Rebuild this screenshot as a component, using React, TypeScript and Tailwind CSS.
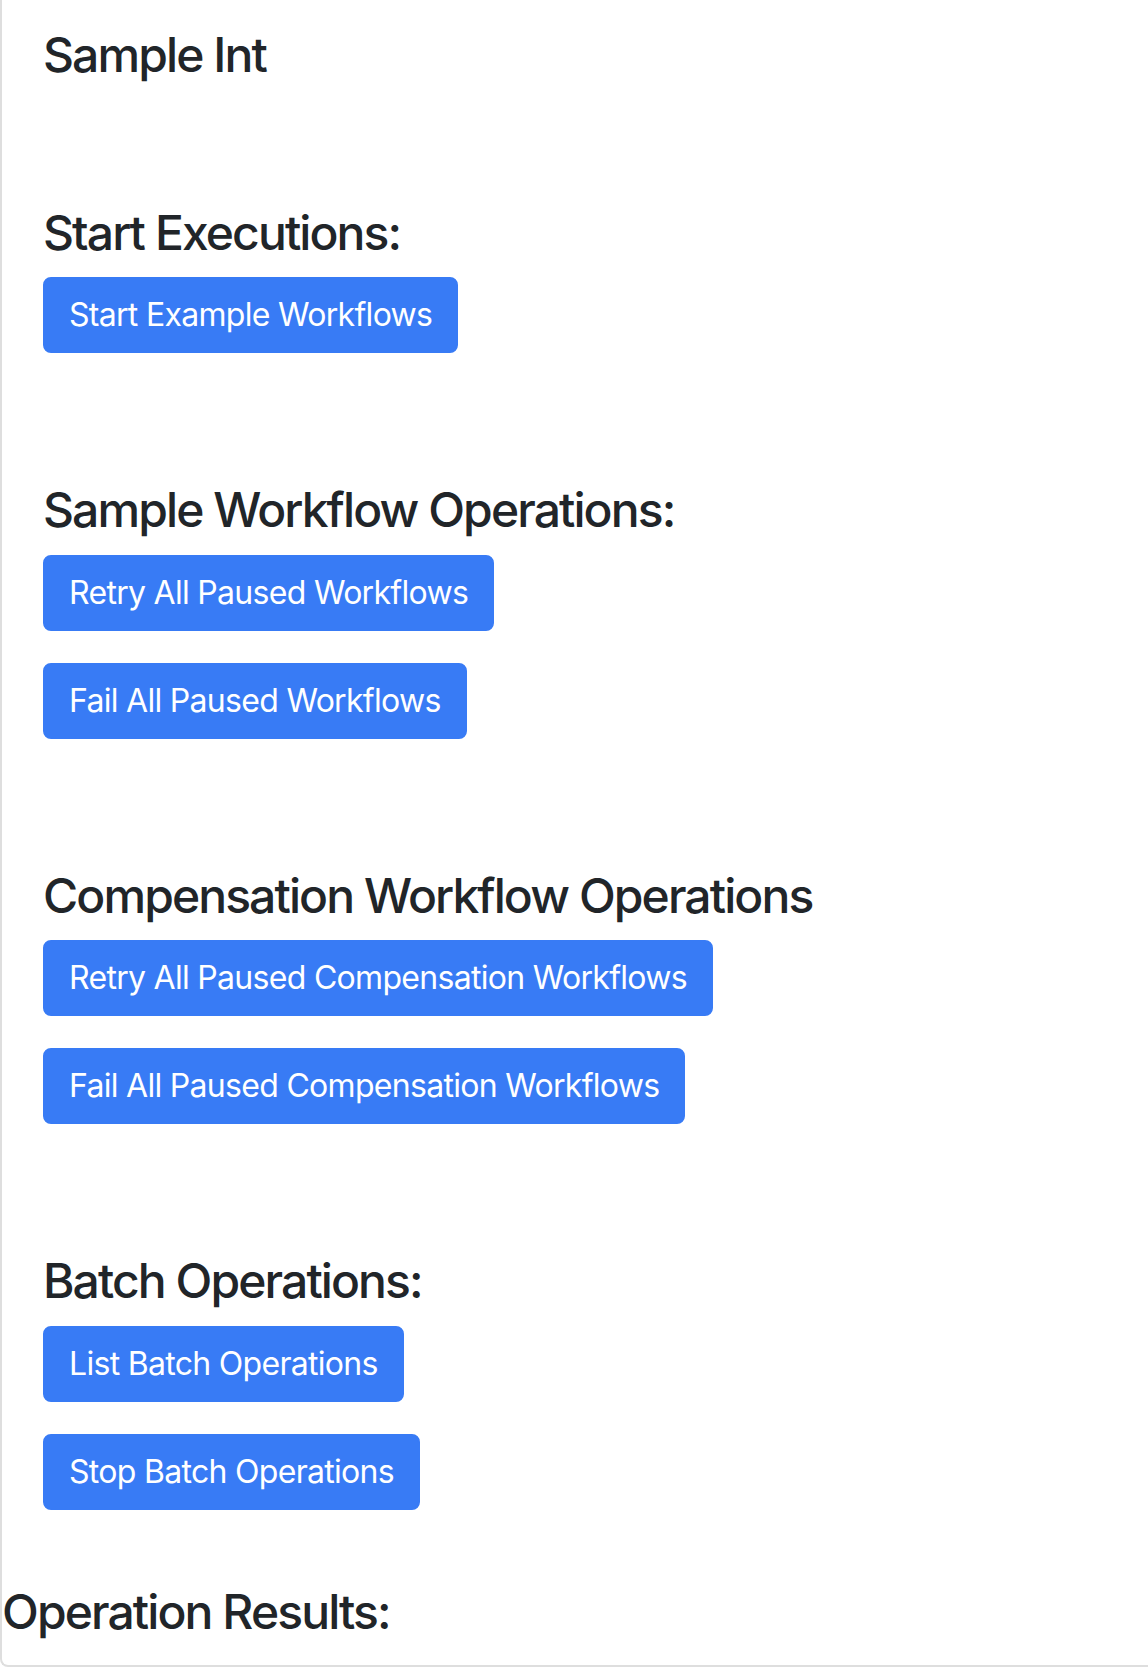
type Section = {
    title: string
    actions: string[]
}

const sections: Section[] = [
    { title: "Start Executions:", actions: ["Start Example Workflows"] },
    { title: "Sample Workflow Operations:", actions: ["Retry All Paused Workflows", "Fail All Paused Workflows"] },
    {
        title: "Compensation Workflow Operations",
        actions: ["Retry All Paused Compensation Workflows", "Fail All Paused Compensation Workflows"],
    },
    { title: "Batch Operations:", actions: ["List Batch Operations", "Stop Batch Operations"] },
]

const headingClass = "text-[48px] leading-[1.2] font-medium tracking-[-1.9px] text-[#212529]"

const App = () => {
    return (
        <div className="min-h-screen bg-white font-['Inter','Liberation_Sans',sans-serif]">
            <div className="border-l-2 border-b-2 border-[#dedede] rounded-bl-[8px] pb-[24px]">
                <div className="pl-[41px] pt-[26px]">
                    <h4 className={headingClass}>Sample Int</h4>

                    {sections.map((section, i) => (
                        <div key={section.title} className={i === 0 ? "mt-[120px]" : "mt-[128px]"}>
                            <h4 className={`${headingClass} mb-[16px]`}>{section.title}</h4>
                            <div className="flex flex-col items-start gap-[32px]">
                                {section.actions.map((action) => (
                                    <button
                                        key={action}
                                        className="bg-[#387bf5] text-white text-[32px] leading-[48px] tracking-[-0.7px] px-[24px] py-[12px] border-2 border-[#387bf5] rounded-[8px]"
                                    >
                                        {action}
                                    </button>
                                ))}
                            </div>
                        </div>
                    ))}
                </div>

                <h4 className={`${headingClass} mt-[73px]`}>Operation Results:</h4>
            </div>
        </div>
    )
}

export default App
